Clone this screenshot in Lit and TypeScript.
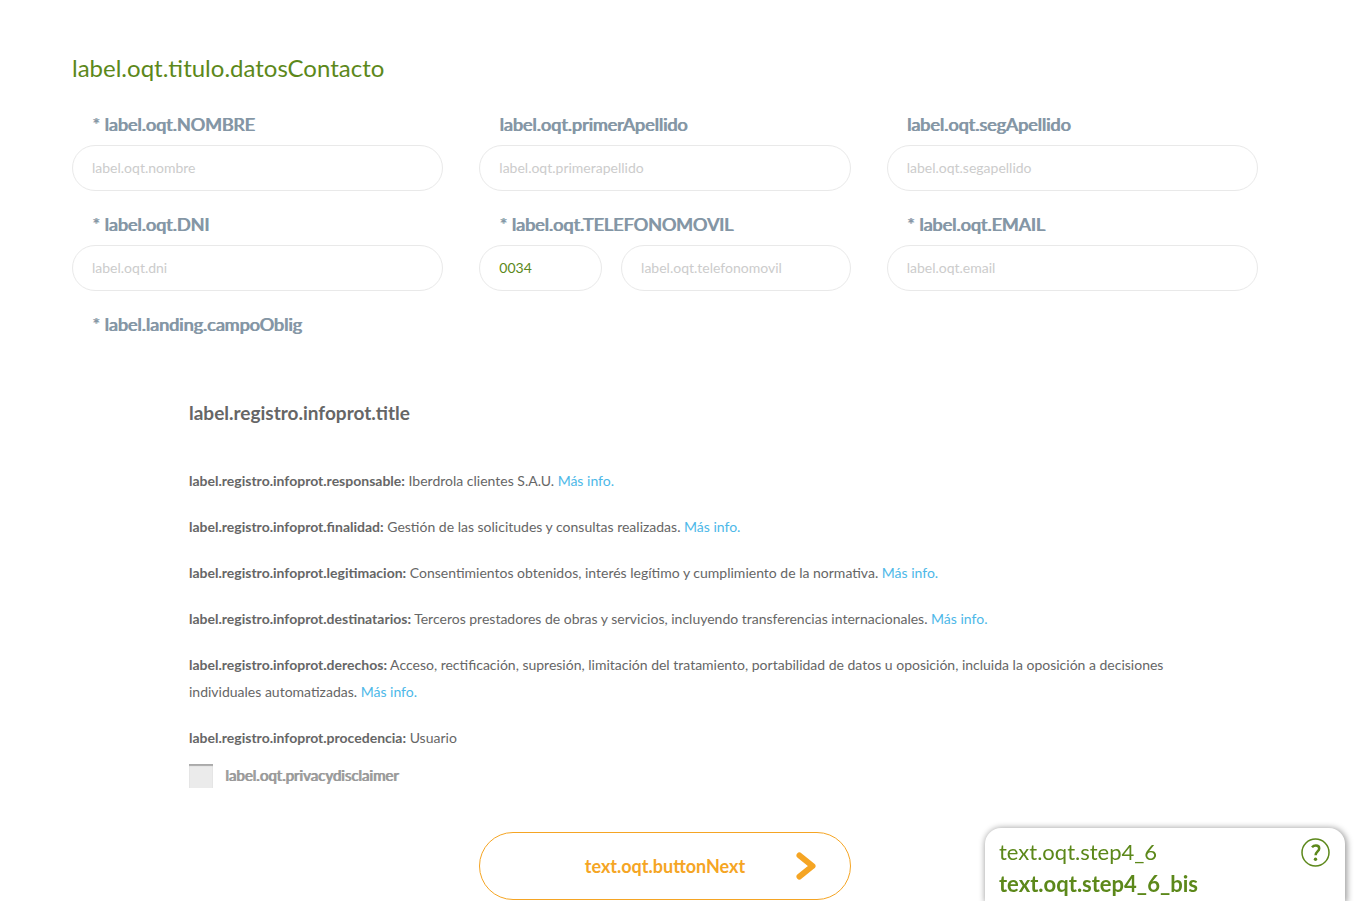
import { LitElement, html, css, nothing } from "lit";
import { customElement } from "lit/decorators.js";

interface Field {
  id: string;
  label: string;
  placeholder: string;
  type?: string;
  prefix?: string;
}

interface Clause {
  name: string;
  text: string;
  more: boolean;
}

const FIELDS: Field[] = [
  { id: "nombre", label: "* label.oqt.NOMBRE", placeholder: "label.oqt.nombre" },
  { id: "apellido1", label: "label.oqt.primerApellido", placeholder: "label.oqt.primerapellido" },
  { id: "apellido2", label: "label.oqt.segApellido", placeholder: "label.oqt.segapellido" },
  { id: "dni", label: "* label.oqt.DNI", placeholder: "label.oqt.dni" },
  { id: "telefono", label: "* label.oqt.TELEFONOMOVIL", placeholder: "label.oqt.telefonomovil", type: "tel", prefix: "0034" },
  { id: "email", label: "* label.oqt.EMAIL", placeholder: "label.oqt.email", type: "email" },
];

const CLAUSES: Clause[] = [
  { name: "responsable", text: "Iberdrola clientes S.A.U.", more: true },
  { name: "finalidad", text: "Gestión de las solicitudes y consultas realizadas.", more: true },
  { name: "legitimacion", text: "Consentimientos obtenidos, interés legítimo y cumplimiento de la normativa.", more: true },
  { name: "destinatarios", text: "Terceros prestadores de obras y servicios, incluyendo transferencias internacionales.", more: true },
  { name: "derechos", text: "Acceso, rectificación, supresión, limitación del tratamiento, portabilidad de datos u oposición, incluida la oposición a decisiones individuales automatizadas.", more: true },
  { name: "procedencia", text: "Usuario", more: false },
];

@customElement("app-root")
export class AppRoot extends LitElement {
  static styles = css`
    :host {
      display: block;
      font-family: Lato, sans-serif;
      color: #666;
      background: #fff;
    }
    * {
      box-sizing: border-box;
    }
    .form {
      padding: 52px 107px 0 72px;
    }
    .title {
      margin: 0 0 28px;
      font-size: 24px;
      line-height: 32px;
      font-weight: 400;
      color: #5c881a;
    }
    .grid {
      display: grid;
      grid-template-columns: repeat(3, minmax(0, 1fr));
      column-gap: 36px;
      row-gap: 21px;
    }
    .field {
      display: flex;
      flex-direction: column;
      gap: 9px;
    }
    .label {
      padding-left: 20px;
      font-size: 18px;
      line-height: 24px;
      font-weight: 400;
      text-shadow: 1px 0 currentColor;
      color: #8496a5;
    }
    .required {
      margin: 21px 0 0;
    }
    .phone {
      display: grid;
      grid-template-columns: 123fr 230fr;
      gap: 19px;
    }
    .input {
      width: 100%;
      height: 46px;
      padding: 0 19px 2px;
      border: 1px solid #e9e9e9;
      border-radius: 23px;
      background: #fff;
      font: 400 14px/20px Lato, sans-serif;
      color: #5c881a;
      outline: none;
    }
    .input:focus {
      border-color: #5c881a;
    }
    .input::placeholder {
      color: #ccc;
      opacity: 1;
    }
    .legal {
      margin: 65px 50px 0 117px;
    }
    .legal-title {
      margin: 0 0 42px;
      font-size: 19px;
      line-height: 24px;
      font-weight: 700;
    }
    .clause {
      margin: 0 0 19px;
      font-size: 14px;
      line-height: 27px;
    }
    .clause:last-of-type {
      margin-bottom: 13px;
    }
    .more {
      color: #4db8e8;
      text-decoration: none;
    }
    .consent {
      display: flex;
      align-items: flex-start;
      gap: 12px;
      font-size: 15px;
      line-height: 22px;
      font-weight: 400;
      text-shadow: 1px 0 currentColor;
      color: #999;
    }
    .check {
      appearance: none;
      flex: none;
      width: 24px;
      height: 24px;
      margin: 0;
      background: #ebebeb;
      box-shadow: inset 0 2px 1px 0 #aaa;
    }
    .check:checked {
      background: #5c881a;
    }
    .actions {
      display: grid;
      grid-template-columns: repeat(3, minmax(0, 1fr));
      column-gap: 36px;
      margin-top: 44px;
      padding-bottom: 40px;
    }
    .next {
      grid-column: 2;
      display: grid;
      grid-template-columns: 1fr auto 1fr;
      align-items: center;
      height: 68px;
      padding: 0 34px;
      border: 1px solid #f5a524;
      border-radius: 34px;
      background: #fff;
      font: 700 18px/24px Lato, sans-serif;
      color: #f5a524;
      cursor: pointer;
    }
    .next-text {
      grid-column: 2;
    }
    .chevron {
      justify-self: end;
      width: 20px;
      height: 28px;
    }
    .step {
      position: fixed;
      right: 20px;
      bottom: 0;
      display: flex;
      justify-content: space-between;
      align-items: flex-start;
      width: 360px;
      padding: 8px 15px 1px 14px;
      border-radius: 16px 16px 0 0;
      background: #fff;
      box-shadow: 1px 1px 6px 1px rgba(0, 0, 0, 0.4);
      font-size: 22px;
      line-height: 32px;
      color: #5c881a;
    }
    .step-line {
      margin: 0;
    }
    .strong {
      font-weight: 700;
    }
    .help {
      display: block;
      flex: none;
      width: 29px;
      height: 29px;
      margin-top: 2px;
      padding: 0;
      border: 0;
      background: none;
      color: #5c881a;
      cursor: pointer;
    }
    .help-icon {
      display: block;
      width: 29px;
      height: 29px;
    }
  `;

  private renderInput(f: Field) {
    return html`<input class="input" id=${f.id} type=${f.type ?? "text"} placeholder=${f.placeholder} />`;
  }

  private renderField(f: Field) {
    return html`
      <div class="field">
        <label class="label" for=${f.id}>${f.label}</label>
        ${f.prefix
          ? html`<div class="phone">
              <input class="input" type="text" aria-label=${f.label} .value=${f.prefix} />
              ${this.renderInput(f)}
            </div>`
          : this.renderInput(f)}
      </div>
    `;
  }

  private renderClause(c: Clause) {
    return html`<p class="clause"><strong>label.registro.infoprot.${c.name}:</strong> ${c.text}${c.more
        ? html` <a class="more" href="#">Más info.</a>`
        : nothing}</p>`;
  }

  render() {
    return html`
      <form class="form" @submit=${(e: Event) => e.preventDefault()}>
        <h1 class="title">label.oqt.titulo.datosContacto</h1>
        <div class="grid">${FIELDS.map((f) => this.renderField(f))}</div>
        <p class="label required">* label.landing.campoOblig</p>

        <section class="legal">
          <h2 class="legal-title">label.registro.infoprot.title</h2>
          ${CLAUSES.map((c) => this.renderClause(c))}
          <div class="consent">
            <input class="check" id="privacy" type="checkbox" />
            <label for="privacy">label.oqt.privacydisclaimer</label>
          </div>
        </section>

        <div class="actions">
          <button class="next" type="submit">
            <span class="next-text">text.oqt.buttonNext</span>
            <svg class="chevron" viewBox="0 0 20 28" aria-hidden="true">
              <path d="M3.500 3.500 L16.500 14 L3.500 24.500" fill="none" stroke="currentColor" stroke-width="6" stroke-linecap="round" stroke-linejoin="round" />
            </svg>
          </button>
        </div>
      </form>

      <aside class="step">
        <div>
          <p class="step-line">text.oqt.step4_6</p>
          <p class="step-line strong">text.oqt.step4_6_bis</p>
        </div>
        <button class="help" type="button" aria-label="Ayuda">
          <svg class="help-icon" viewBox="0 0 29 29" fill="none" stroke="currentColor" aria-hidden="true">
            <circle cx="14.500" cy="14.500" r="13.500" stroke-width="1.500" />
            <path d="M11 9.300 C12.200 7.900 13.600 7.500 14.900 7.500 C16.900 7.500 18.200 8.700 18.200 10.400 C18.200 13.300 14.700 13.400 14.600 17.200" stroke-width="2.500" />
            <circle cx="14.500" cy="21.300" r="1.700" fill="currentColor" stroke="none" />
          </svg>
        </button>
      </aside>
    `;
  }
}
